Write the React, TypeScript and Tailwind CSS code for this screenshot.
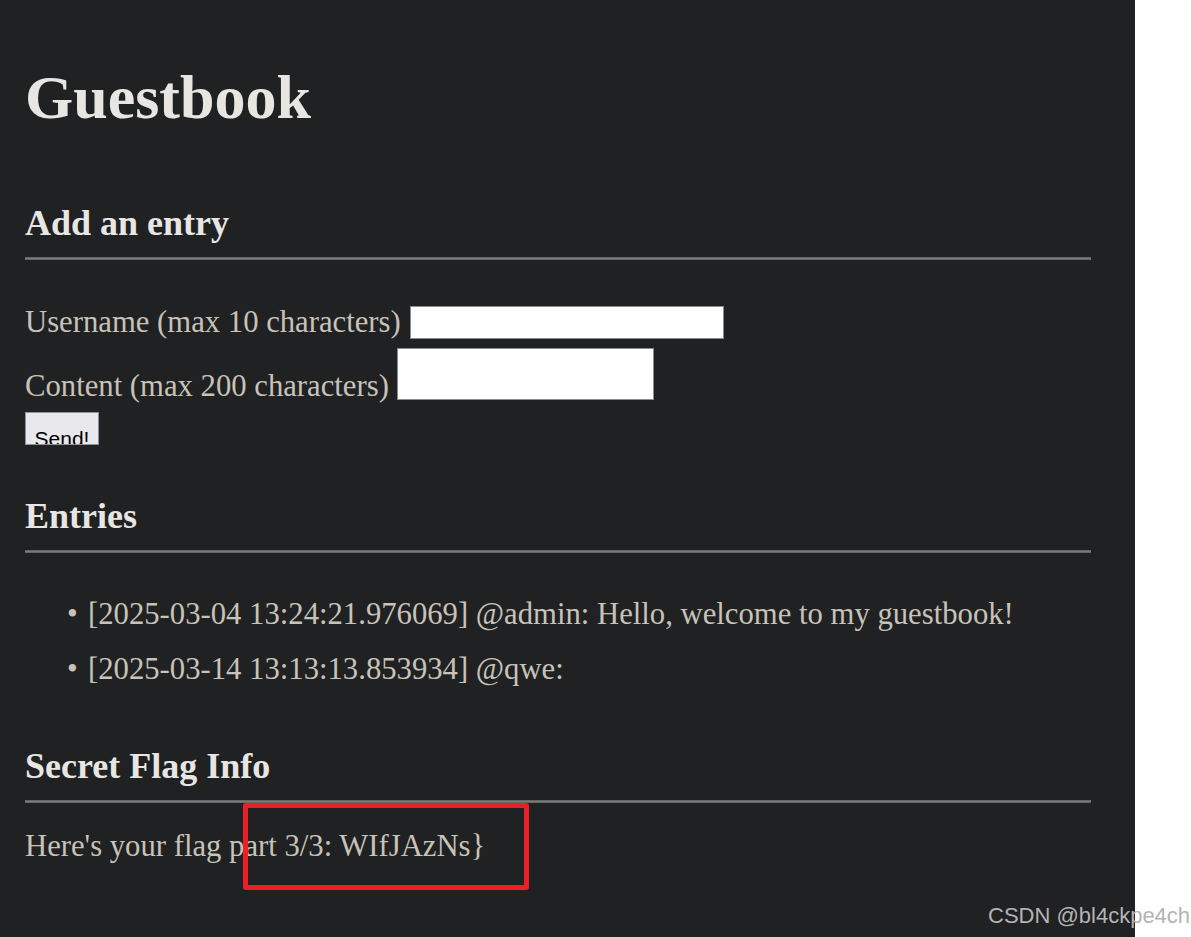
import React from 'react';

const entries = [
    { time: '2025-03-04 13:24:21.976069', user: 'admin', text: 'Hello, welcome to my guestbook!' },
    { time: '2025-03-14 13:13:13.853934', user: 'qwe', text: '' },
];

function SectionTitle({ children, top }: { children: React.ReactNode; top: string }) {
    return (
        <>
            <h2 className={`${top} h-[36px] text-[36px] leading-[36px] font-bold text-[#e8e6e3]`}>{children}</h2>
            <div className="mt-[16px] h-[3px] w-[1066px] bg-[#7b7b7b] border-y border-[#666]" />
        </>
    );
}

export default function App() {
    return (
        <div className="relative w-[1191px] h-[937px] bg-white overflow-hidden">
            {/* page */}
            <div className="w-[1135px] h-full bg-[#1f2123] pl-[25px] flex flex-col font-['Liberation_Serif',serif] text-[#c8c2b8]">
                <h1 className="mt-[66px] h-[62px] text-[62px] leading-[62px] font-bold text-[#e8e6e3]">Guestbook</h1>

                <SectionTitle top="mt-[77px]">Add an entry</SectionTitle>

                <div className="mt-[46px] flex items-start">
                    <span className="text-[30.7px] leading-[33px]">Username (max 10 characters)</span>
                    <input className="ml-[9px] h-[33px] w-[314px] bg-white border border-[#8b8b8b] outline-none" />
                </div>
                <div className="mt-[9px] flex items-end">
                    <span className="text-[30.7px] leading-[27px]">Content (max 200 characters)</span>
                    <textarea className="ml-[8px] h-[52px] w-[257px] bg-white border border-[#8b8b8b] outline-none resize-none" />
                </div>
                <button className="mt-[12px] h-[33px] w-[74px] overflow-hidden bg-[#e9e9ed] border border-[#8f8f9d] pt-[15px] flex justify-center items-start font-['Liberation_Sans',sans-serif] text-[21px] leading-[21px] text-black">
                    Send!
                </button>

                <SectionTitle top="mt-[53px]">Entries</SectionTitle>

                <ul className="mt-[34px] pl-[42px] text-[30.7px] leading-[55px]">
                    {entries.map((e) => (
                        <li key={e.time}>
                            <span className="inline-block w-[21px]">•</span>[{e.time}] @{e.user}: {e.text}
                        </li>
                    ))}
                </ul>

                <SectionTitle top="mt-[51px]">Secret Flag Info</SectionTitle>

                <p className="mt-[28px] text-[30.7px] leading-[31px]">{"Here's your flag part 3/3: WIfJAzNs}"}</p>
            </div>

            {/* annotation + watermark */}
            <div className="absolute left-[243px] top-[803px] w-[286px] h-[87px] border-[5px] border-[#ea1f28] rounded-[3px]" />
            <div className="absolute left-[988px] top-[903px] font-['Liberation_Sans',sans-serif] text-[22px] leading-[26px] text-[#b4b4b4]">
                CSDN @bl4ckpe4ch
            </div>
        </div>
    );
}
